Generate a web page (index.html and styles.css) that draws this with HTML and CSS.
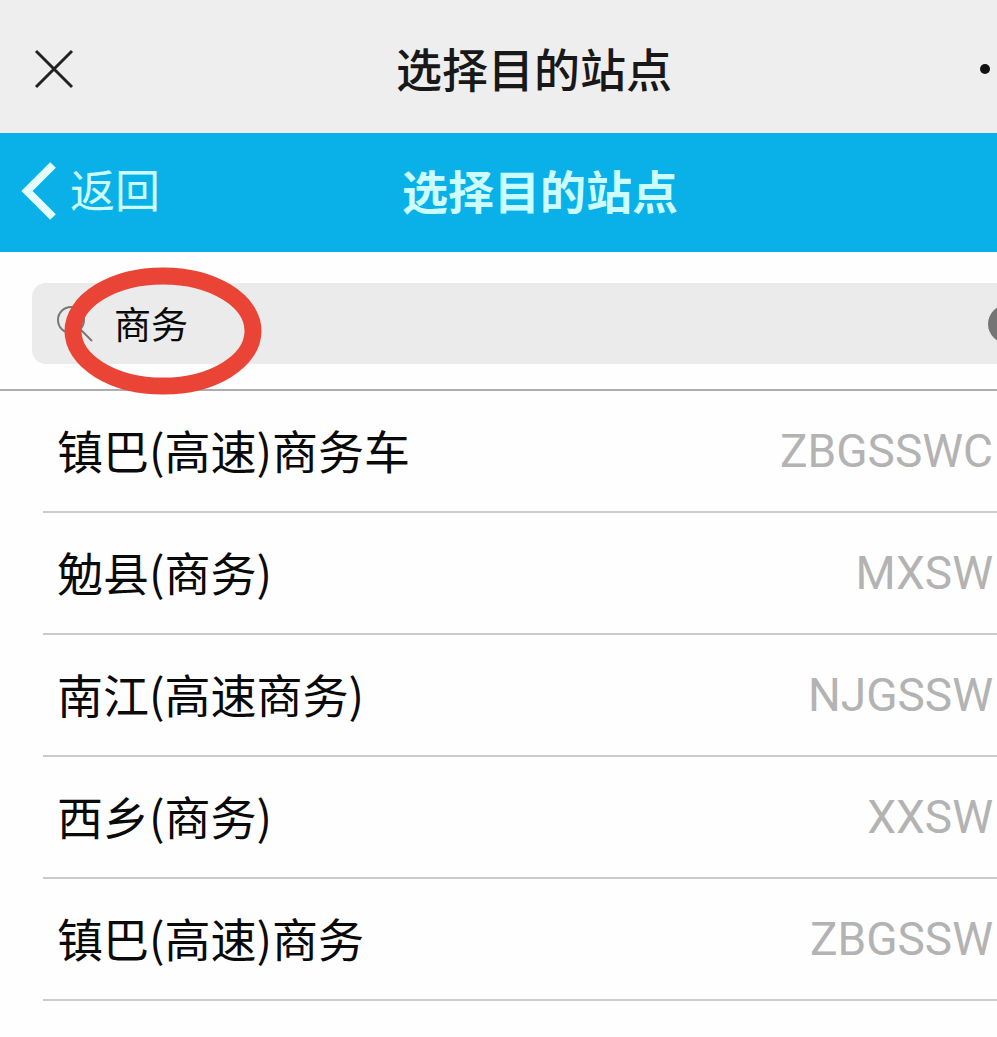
FILE: index.html
```
<!DOCTYPE html>
<html lang="zh-CN">
<head>
    <meta charset="UTF-8">
    <title>选择目的站点</title>
    <link rel="stylesheet" href="styles.css">
</head>
<body>
    <header class="app-bar">
        <button class="close-button" type="button" aria-label="关闭">
            <svg width="40" height="40" viewBox="0 0 40 40"><path d="M2 2L38 38M38 2L2 38"/></svg>
        </button>
        <div class="app-title">选择目的站点</div>
        <button class="more-button" type="button" aria-label="更多">
            <svg width="10" height="10" viewBox="0 0 10 10"><circle cx="5" cy="5" r="5"/></svg>
        </button>
    </header>
    <nav class="nav-bar">
        <a class="back-link" href="#">
            <svg width="36" height="58" viewBox="0 0 36 58"><path d="M33 3L7 29L33 55"/></svg>
            <span>返回</span>
        </a>
        <h1>选择目的站点</h1>
    </nav>
    <main>
        <form class="search-bar">
            <div class="search-box">
                <svg class="search-icon" width="36" height="36" viewBox="0 0 36 36"><circle cx="14" cy="14" r="13"/><path d="M23 23L35 35"/></svg>
                <input class="search-input" type="text" value="商务" aria-label="搜索站点">
                <button class="clear-button" type="button" aria-label="清除"></button>
            </div>
            <svg class="marker" width="198" height="130" viewBox="0 0 198 130"><ellipse cx="99" cy="65" rx="90" ry="55"/></svg>
        </form>
        <ul class="station-list">
            <li><a href="#"><span class="name">镇巴(高速)商务车</span><span class="code">ZBGSSWC</span></a></li>
            <li><a href="#"><span class="name">勉县(商务)</span><span class="code">MXSW</span></a></li>
            <li><a href="#"><span class="name">南江(高速商务)</span><span class="code">NJGSSW</span></a></li>
            <li><a href="#"><span class="name">西乡(商务)</span><span class="code">XXSW</span></a></li>
            <li><a href="#"><span class="name">镇巴(高速)商务</span><span class="code">ZBGSSW</span></a></li>
        </ul>
    </main>
</body>
</html>
```
FILE: styles.css
```
* {
    box-sizing: border-box;
}
body {
    margin: 0;
    background-color: #fefefe;
    color: #0a0a0a;
    font-family: "Noto Sans CJK SC", sans-serif;
    font-size: 46px;
    line-height: 66px;
    overflow-x: hidden;
}
button {
    border: 0;
    padding: 0;
    background: none;
}
svg {
    display: block;
    fill: none;
}
a {
    color: inherit;
    text-decoration: none;
}
.app-bar {
    display: flex;
    align-items: center;
    padding: 4px 7px 0 34px;
    height: 133px;
    background-color: #eeeeee;
}
.close-button svg {
    stroke: #222;
    stroke-width: 3;
}
.app-title {
    flex: 1;
    padding: 0 0 4px 14px;
    color: #181818;
    font-weight: 500;
    text-align: center;
}
.more-button svg {
    fill: #111;
}
.nav-bar {
    display: flex;
    align-items: center;
    padding: 0 97px 4px 20px;
    height: 119px;
    background-color: #0ab1e8;
    color: #ccfdff;
}
.back-link {
    display: flex;
    align-items: center;
    gap: 14px;
    width: 160px;
    font-size: 45px;
}
.back-link span {
    padding-bottom: 4px;
}
.back-link svg {
    stroke: #e4feff;
    stroke-width: 8;
}
.nav-bar h1 {
    flex: 1;
    margin: 0;
    padding-bottom: 4px;
    font-size: 46px;
    font-weight: 700;
    text-align: center;
}
.search-bar {
    position: relative;
    padding: 31px 0 25px 32px;
    border-bottom: 2px solid #adadad;
}
.search-box {
    display: flex;
    align-items: center;
    height: 81px;
    padding-left: 25px;
    border-radius: 14px 0 0 14px;
    background-color: #ebebeb;
}
.search-icon {
    stroke: #777;
    stroke-width: 2;
}
.search-input {
    flex: 1;
    min-width: 0;
    padding: 0 0 2px 21px;
    border: 0;
    outline: 0;
    background: none;
    color: #0a0a0a;
    font-family: inherit;
    font-size: 37px;
}
.clear-button {
    width: 38px;
    height: 38px;
    margin-right: -29px;
    border-radius: 50%;
    background-color: #757575;
}
/* red ring drawn over the search text */
.marker {
    position: absolute;
    top: 14px;
    left: 64px;
    stroke: #ea4436;
    stroke-width: 17;
    pointer-events: none;
}
.station-list {
    margin: 0;
    padding: 0 0 0 43px;
    list-style: none;
}
.station-list li {
    border-bottom: 2px solid #cbcbcb;
}
.station-list a {
    display: flex;
    align-items: center;
    justify-content: space-between;
    height: 120px;
    padding: 0 4px 0 14px;
}
.name {
    padding-bottom: 4px;
}
.code {
    color: #b3b3b3;
    font-family: Roboto, sans-serif;
}
```
